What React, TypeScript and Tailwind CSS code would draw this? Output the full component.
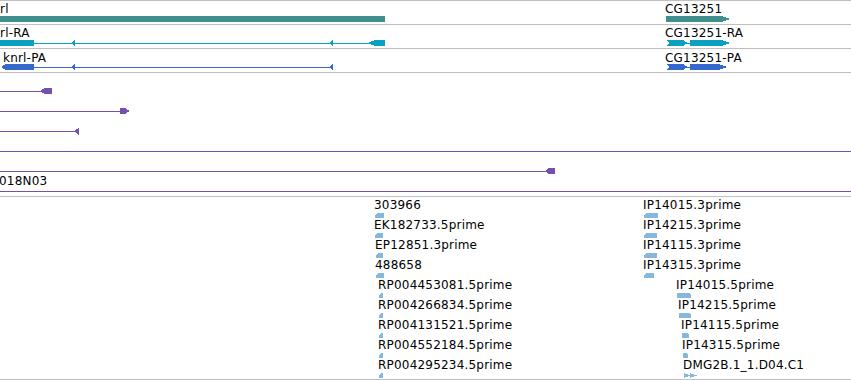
import type { FC, ReactNode } from "react";

const TEAL = "#408f8f";
const CYAN = "#0aa0c0";
const BLUE = "#3568cc";
const PURPLE = "#7352ad";
const LIGHT = "#86b8de";

const Label: FC<{ className: string; children: ReactNode }> = ({ className, children }) => (
  <span className={`absolute whitespace-nowrap text-[12px] leading-3 tracking-[0.2px] text-black ${className}`}>
    {children}
  </span>
);

// small feature arrow used in the EST / cDNA track
const Arrow: FC<{ w: number; dir: "l" | "r"; double?: boolean }> = ({ w, dir, double }) => {
  let shape: ReactNode;
  if (double) {
    shape = (
      <>
        <polygon points="0,0 6,2.5 0,5" fill={LIGHT} />
        <polygon points="6,0 12,2.5 6,5" fill={LIGHT} />
        <rect x="0" y="2" width={w} height="1" fill={LIGHT} />
      </>
    );
  } else if (dir === "l") {
    shape = <polygon points={`0,2 2,0 ${w},0 ${w},5 0,5`} fill={LIGHT} />;
  } else {
    shape = <polygon points={`0,0 ${w - 2},0 ${w},2 ${w},5 0,5`} fill={LIGHT} />;
  }
  return (
    <svg width={w} height="5" className="mt-[2px] block" shapeRendering="crispEdges">
      {shape}
    </svg>
  );
};

const Row: FC<{ pad: string; label: string; w: number; dir: "l" | "r"; double?: boolean }> = ({
  pad,
  label,
  w,
  dir,
  double
}) => (
  <div className={`h-[20px] ${pad}`}>
    <div className="-ml-px whitespace-nowrap text-[12px] leading-3 tracking-[0.2px] text-black">{label}</div>
    <Arrow w={w} dir={dir} double={double} />
  </div>
);

export default function App() {
  return (
    <div className="h-[380px] w-[851px] overflow-hidden border-t border-[#c0c0c0] bg-white font-['DejaVu_Sans',sans-serif]">
      {/* gene track */}
      <div className="relative h-[24px] border-b border-[#c0c0c0]">
        <svg width="851" height="23" className="block" shapeRendering="crispEdges">
          <rect x="0" y="15" width="385" height="6" fill={TEAL} />
          <polygon points="666,15 721,15 731,18 721,21 666,21" fill={TEAL} />
        </svg>
        <Label className="left-0 top-[2px]">rl</Label>
        <Label className="left-[665px] top-[2px]">CG13251</Label>
      </div>

      {/* mRNA track */}
      <div className="relative h-[24px] border-b border-[#c0c0c0]">
        <svg width="851" height="23" className="block" shapeRendering="crispEdges">
          <rect x="0" y="15" width="34" height="6" fill={CYAN} />
          <rect x="34" y="18" width="336" height="1" fill={CYAN} />
          <polygon points="71,18 75,15 75,22" fill={CYAN} />
          <polygon points="329,18 333,15 333,22" fill={CYAN} />
          <polygon points="368,18 375,15 385,15 385,21 375,21" fill={CYAN} />
          <polygon points="666,15 683,15 688,18 683,21 666,21 669,18" fill={CYAN} />
          <rect x="687" y="18" width="4" height="1" fill={CYAN} />
          <polygon points="690,15 721,15 731,18 721,21 690,21" fill={CYAN} />
        </svg>
        <Label className="left-0 top-[2px]">rl-RA</Label>
        <Label className="left-[665px] top-[2px]">CG13251-RA</Label>
      </div>

      {/* protein track */}
      <div className="relative h-[24px] border-b border-[#c0c0c0]">
        <svg width="851" height="23" className="block" shapeRendering="crispEdges">
          <polygon points="1,18 6,15 34,15 34,21 6,21" fill={BLUE} />
          <rect x="34" y="18" width="297" height="1" fill={BLUE} />
          <polygon points="71,18 75,15 75,22" fill={BLUE} />
          <polygon points="329,18 333,15 333,22" fill={BLUE} />
          <polygon points="666,15 683,15 688,18 683,21 666,21 669,18" fill={BLUE} />
          <rect x="687" y="18" width="4" height="1" fill={BLUE} />
          <polygon points="690,15 718,15 727,18 718,21 690,21" fill={BLUE} />
        </svg>
        <Label className="left-[3px] top-[3px]">knrl-PA</Label>
        <Label className="left-[665px] top-[3px]">CG13251-PA</Label>
      </div>

      {/* BAC / insertion track */}
      <div className="relative h-[124px] border-b border-[#c0c0c0]">
        <svg width="851" height="123" className="block" shapeRendering="crispEdges">
          <rect x="0" y="18" width="42" height="1" fill={PURPLE} />
          <polygon points="40,18 45,15 52,15 52,21 45,21" fill={PURPLE} />
          <rect x="0" y="38" width="122" height="1" fill={PURPLE} />
          <polygon points="120,35 125,35 130,38 125,41 120,41" fill={PURPLE} />
          <rect x="0" y="58" width="76" height="1" fill={PURPLE} />
          <polygon points="74,58 79,55 79,62" fill={PURPLE} />
          <rect x="0" y="78" width="851" height="1" fill={PURPLE} />
          <rect x="0" y="98" width="547" height="1" fill={PURPLE} />
          <polygon points="545,98 549,95 555,95 555,101 549,101" fill={PURPLE} />
          <rect x="0" y="118" width="851" height="1" fill={PURPLE} />
        </svg>
        <Label className="left-[-1px] top-[102px]">018N03</Label>
      </div>

      {/* EST track */}
      <div className="flex h-[183px] border-b border-[#c0c0c0] pt-[2px]">
        <div className="flex w-[644px] flex-col">
          <Row pad="pl-[375px]" label="303966" w={9} dir="l" />
          <Row pad="pl-[375px]" label="EK182733.5prime" w={8} dir="l" />
          <Row pad="pl-[376px]" label="EP12851.3prime" w={7} dir="l" />
          <Row pad="pl-[376px]" label="488658" w={8} dir="l" />
          <Row pad="pl-[379px]" label="RP004453081.5prime" w={4} dir="l" />
          <Row pad="pl-[379px]" label="RP004266834.5prime" w={4} dir="l" />
          <Row pad="pl-[379px]" label="RP004131521.5prime" w={4} dir="l" />
          <Row pad="pl-[379px]" label="RP004552184.5prime" w={4} dir="l" />
          <Row pad="pl-[379px]" label="RP004295234.5prime" w={4} dir="l" />
        </div>
        <div className="flex flex-col">
          <Row pad="pl-0" label="IP14015.3prime" w={14} dir="l" />
          <Row pad="pl-0" label="IP14215.3prime" w={13} dir="l" />
          <Row pad="pl-0" label="IP14115.3prime" w={13} dir="l" />
          <Row pad="pl-0" label="IP14315.3prime" w={10} dir="l" />
          <Row pad="pl-[33px]" label="IP14015.5prime" w={14} dir="r" />
          <Row pad="pl-[35px]" label="IP14215.5prime" w={12} dir="r" />
          <Row pad="pl-[38px]" label="IP14115.5prime" w={7} dir="r" />
          <Row pad="pl-[39px]" label="IP14315.5prime" w={5} dir="r" />
          <Row pad="pl-[40px]" label="DMG2B.1_1.D04.C1" w={13} dir="r" double />
        </div>
      </div>
    </div>
  );
}
